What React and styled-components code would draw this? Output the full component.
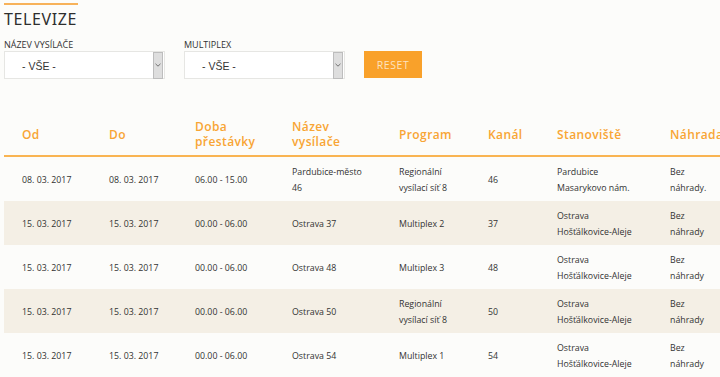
import React from "react";
import styled, { createGlobalStyle } from "styled-components";

const Global = createGlobalStyle`
  html, body { margin: 0; padding: 0; background: #fcfcfa; overflow: hidden; }
  body { font-family: "Open Sans", "Liberation Sans", sans-serif; color: #333; }
`;

const Page = styled.div`
  width: 720px;
  height: 377px;
  overflow: hidden;
  padding: 0 0 0 4px;
  box-sizing: border-box;
`;

const TitleBlock = styled.div`
  margin-top: 3px;
  width: 74px;
  border-top: 2px solid #f7b25a;
`;

const Title = styled.h1`
  margin: 0;
  padding-top: 5px;
  font-family: "Noto Sans", "DejaVu Sans", sans-serif;
  font-weight: 400;
  font-size: 16px;
  line-height: 18px;
  letter-spacing: 0.6px;
  color: #2e2e2e;
`;

const Filters = styled.div`
  display: flex;
  align-items: flex-end;
  gap: 19px;
  margin-top: 11px;
`;

const Field = styled.div`
  display: flex;
  flex-direction: column;
`;

const Label = styled.label`
  font-size: 9px;
  line-height: 12px;
  text-transform: uppercase;
  color: #333;
`;

const Select = styled.div`
  width: 161px;
  height: 28px;
  box-sizing: border-box;
  border: 1px solid #e6e6e3;
  background: #fff;
  display: flex;
  align-items: center;
  justify-content: space-between;
`;

const SelectText = styled.span`
  padding-left: 17px;
  padding-top: 1px;
  font-family: "Liberation Sans", Arial, sans-serif;
  font-size: 10.5px;
  color: #333;
`;

const Arrow = styled.span`
  width: 10px;
  height: 27px;
  box-sizing: border-box;
  border: 1px solid #bdbdbd;
  background: #dedede;
  display: flex;
  align-items: center;
  justify-content: center;
  margin-right: 1px;
`;

const ResetButton = styled.button`
  width: 58px;
  height: 27px;
  margin-bottom: 1px;
  border: 0;
  background: #f9a12a;
  color: #fde3c0;
  font-family: "Open Sans", sans-serif;
  font-size: 10.5px;
  letter-spacing: 0.6px;
  padding: 0;
`;

const Table = styled.table`
  margin-top: 36px;
  border-collapse: collapse;
  table-layout: fixed;
  width: 716px;
`;

const Th = styled.th`
  text-align: left;
  vertical-align: middle;
  padding: 4px 12px 6px 18px;
  font-family: "Open Sans", sans-serif;
  font-weight: 600;
  font-size: 12px;
  line-height: 15px;
  letter-spacing: 0.4px;
  color: #f8a534;
  border-bottom: 2px solid #f9b452;
`;

const Tr = styled.tr`
  background: ${(p) => (p.$alt ? "#f4efe5" : "transparent")};
`;

const Td = styled.td`
  padding: 7px 12px 5px 18px;
  height: 32px;
  vertical-align: middle;
  font-size: 8.8px;
  line-height: 16px;
  color: #333;
`;

const widths = [87, 86, 97, 107, 89, 69, 113, 68];
const headers = ["Od", "Do", "Doba přestávky", "Název vysílače", "Program", "Kanál", "Stanoviště", "Náhrada"];

const rows = [
  ["08. 03. 2017", "08. 03. 2017", "06.00 - 15.00", "Pardubice-město 46", "Regionální vysílací síť 8", "46", "Pardubice Masarykovo nám.", "Bez náhrady."],
  ["15. 03. 2017", "15. 03. 2017", "00.00 - 06.00", "Ostrava 37", "Multiplex 2", "37", "Ostrava Hošťálkovice-Aleje", "Bez náhrady"],
  ["15. 03. 2017", "15. 03. 2017", "00.00 - 06.00", "Ostrava 48", "Multiplex 3", "48", "Ostrava Hošťálkovice-Aleje", "Bez náhrady"],
  ["15. 03. 2017", "15. 03. 2017", "00.00 - 06.00", "Ostrava 50", "Regionální vysílací síť 8", "50", "Ostrava Hošťálkovice-Aleje", "Bez náhrady"],
  ["15. 03. 2017", "15. 03. 2017", "00.00 - 06.00", "Ostrava 54", "Multiplex 1", "54", "Ostrava Hošťálkovice-Aleje", "Bez náhrady"],
];

const Chevron = () => (
  <svg width="6" height="4" viewBox="0 0 6 4">
    <path d="M0.5 0.8 L3 3.2 L5.5 0.8" fill="none" stroke="#666" strokeWidth="0.9" />
  </svg>
);

const SelectBox = ({ label }) => (
  <Field>
    <Label>{label}</Label>
    <Select>
      <SelectText>- VŠE -</SelectText>
      <Arrow>
        <Chevron />
      </Arrow>
    </Select>
  </Field>
);

export default function App() {
  return (
    <Page>
      <Global />
      <TitleBlock>
        <Title>TELEVIZE</Title>
      </TitleBlock>
      <Filters>
        <SelectBox label="Název vysílače" />
        <SelectBox label="Multiplex" />
        <ResetButton>RESET</ResetButton>
      </Filters>
      <Table>
        <colgroup>
          {widths.map((w, i) => (
            <col key={i} style={{ width: w }} />
          ))}
        </colgroup>
        <thead>
          <tr>
            {headers.map((h) => (
              <Th key={h}>{h}</Th>
            ))}
          </tr>
        </thead>
        <tbody>
          {rows.map((r, i) => (
            <Tr key={i} $alt={i % 2 === 1}>
              {r.map((c, j) => (
                <Td key={j}>{c}</Td>
              ))}
            </Tr>
          ))}
        </tbody>
      </Table>
    </Page>
  );
}
